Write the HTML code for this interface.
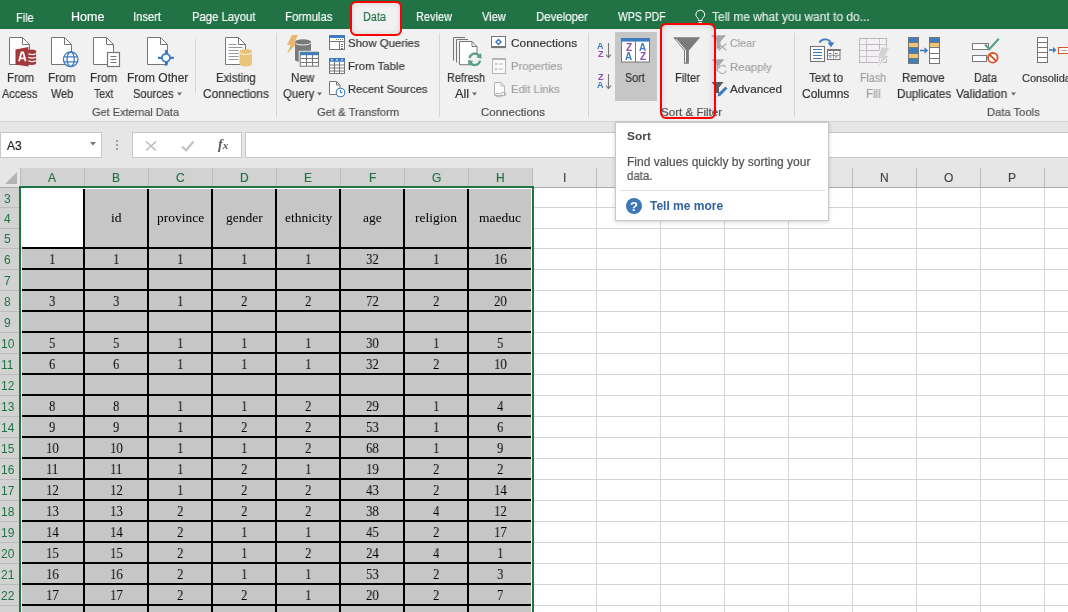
<!DOCTYPE html><html><head><meta charset="utf-8"><style>
*{box-sizing:border-box;margin:0;padding:0}
html,body{width:1068px;height:612px;overflow:hidden;background:#fff;font-family:"Liberation Sans", sans-serif;position:relative}
.abs{position:absolute}
.t{position:absolute;white-space:nowrap;line-height:1;will-change:transform}
.sk{-webkit-text-stroke:0.18px currentColor}
</style></head><body>
<div class="abs" style="left:0;top:0;width:1068px;height:29px;background:#217346"></div>
<div class="abs" style="left:0;top:29px;width:1068px;height:92px;background:#f1f1f1"></div>
<div class="abs" style="left:0;top:121px;width:1068px;height:1px;background:#d4d4d4"></div>
<div class="abs" style="left:0;top:122px;width:1068px;height:46px;background:#e6e6e6"></div>
<div class="abs" style="left:615px;top:32px;width:42px;height:69px;background:#c6c6c6"></div>
<div class="abs" style="left:661px;top:25px;width:53px;height:93px;background:#f1f1f1;box-shadow:inset 0 0 7px rgba(0,0,0,0.16);border-radius:5px"></div>
<div class="abs" style="left:351px;top:2px;width:50px;height:33px;background:#f1f1f1;box-shadow:inset 0 0 6px rgba(0,0,0,0.16);border-radius:5px"></div>
<div class="t sk" style="left:15.70px;top:12.22px;font-family:'Liberation Sans', sans-serif;font-size:12.5px;color:#fff;font-weight:normal;transform:scaleX(0.8700);transform-origin:0 0;">File</div>
<div class="t sk" style="left:71.20px;top:10.62px;font-family:'Liberation Sans', sans-serif;font-size:12.5px;color:#fff;font-weight:normal;transform:scaleX(0.9939);transform-origin:0 0;">Home</div>
<div class="t sk" style="left:133.40px;top:10.62px;font-family:'Liberation Sans', sans-serif;font-size:12.5px;color:#fff;font-weight:normal;transform:scaleX(0.8937);transform-origin:0 0;">Insert</div>
<div class="t sk" style="left:191.50px;top:10.62px;font-family:'Liberation Sans', sans-serif;font-size:12.5px;color:#fff;font-weight:normal;transform:scaleX(0.9042);transform-origin:0 0;">Page Layout</div>
<div class="t sk" style="left:285.40px;top:10.62px;font-family:'Liberation Sans', sans-serif;font-size:12.5px;color:#fff;font-weight:normal;transform:scaleX(0.9113);transform-origin:0 0;">Formulas</div>
<div class="t sk" style="left:363.20px;top:10.62px;font-family:'Liberation Sans', sans-serif;font-size:12.5px;color:#217346;font-weight:normal;transform:scaleX(0.8667);transform-origin:0 0;">Data</div>
<div class="t sk" style="left:416.00px;top:10.62px;font-family:'Liberation Sans', sans-serif;font-size:12.5px;color:#fff;font-weight:normal;transform:scaleX(0.8762);transform-origin:0 0;">Review</div>
<div class="t sk" style="left:481.90px;top:10.62px;font-family:'Liberation Sans', sans-serif;font-size:12.5px;color:#fff;font-weight:normal;transform:scaleX(0.8857);transform-origin:0 0;">View</div>
<div class="t sk" style="left:536.20px;top:10.62px;font-family:'Liberation Sans', sans-serif;font-size:12.5px;color:#fff;font-weight:normal;transform:scaleX(0.9138);transform-origin:0 0;">Developer</div>
<div class="t sk" style="left:618.00px;top:10.62px;font-family:'Liberation Sans', sans-serif;font-size:12.5px;color:#fff;font-weight:normal;transform:scaleX(0.8351);transform-origin:0 0;">WPS PDF</div>
<div class="t sk" style="left:712.40px;top:10.62px;font-family:'Liberation Sans', sans-serif;font-size:12.5px;color:#e0ebe4;font-weight:normal;transform:scaleX(0.9576);transform-origin:0 0;">Tell me what you want to do...</div>
<div class="t sk" style="left:6.60px;top:71.84px;font-family:'Liberation Sans', sans-serif;font-size:12px;color:#333333;font-weight:normal;transform:scaleX(0.9679);transform-origin:0 0;">From</div>
<div class="t sk" style="left:2.20px;top:87.74px;font-family:'Liberation Sans', sans-serif;font-size:12px;color:#333333;font-weight:normal;transform:scaleX(0.9128);transform-origin:0 0;">Access</div>
<div class="t sk" style="left:48.30px;top:71.84px;font-family:'Liberation Sans', sans-serif;font-size:12px;color:#333333;font-weight:normal;transform:scaleX(0.9821);transform-origin:0 0;">From</div>
<div class="t sk" style="left:50.60px;top:87.74px;font-family:'Liberation Sans', sans-serif;font-size:12px;color:#333333;font-weight:normal;transform:scaleX(0.9120);transform-origin:0 0;">Web</div>
<div class="t sk" style="left:90.40px;top:71.84px;font-family:'Liberation Sans', sans-serif;font-size:12px;color:#333333;font-weight:normal;transform:scaleX(0.9714);transform-origin:0 0;">From</div>
<div class="t sk" style="left:93.60px;top:87.74px;font-family:'Liberation Sans', sans-serif;font-size:12px;color:#333333;font-weight:normal;transform:scaleX(0.8739);transform-origin:0 0;">Text</div>
<div class="t sk" style="left:127.30px;top:71.84px;font-family:'Liberation Sans', sans-serif;font-size:12px;color:#333333;font-weight:normal;">From Other</div>
<div class="t sk" style="left:133.30px;top:87.74px;font-family:'Liberation Sans', sans-serif;font-size:12px;color:#333333;font-weight:normal;transform:scaleX(0.9205);transform-origin:0 0;">Sources</div>
<div class="t sk" style="left:215.60px;top:71.84px;font-family:'Liberation Sans', sans-serif;font-size:12px;color:#333333;font-weight:normal;transform:scaleX(0.9452);transform-origin:0 0;">Existing</div>
<div class="t sk" style="left:202.50px;top:87.74px;font-family:'Liberation Sans', sans-serif;font-size:12px;color:#333333;font-weight:normal;transform:scaleX(0.9881);transform-origin:0 0;">Connections</div>
<div class="t sk" style="left:291.30px;top:71.84px;font-family:'Liberation Sans', sans-serif;font-size:12px;color:#333333;font-weight:normal;transform:scaleX(0.9750);transform-origin:0 0;">New</div>
<div class="t sk" style="left:283.20px;top:87.74px;font-family:'Liberation Sans', sans-serif;font-size:12px;color:#333333;font-weight:normal;transform:scaleX(0.9545);transform-origin:0 0;">Query</div>
<div class="t sk" style="left:446.50px;top:71.84px;font-family:'Liberation Sans', sans-serif;font-size:12px;color:#333333;font-weight:normal;transform:scaleX(0.9071);transform-origin:0 0;">Refresh</div>
<div class="t sk" style="left:455.20px;top:87.74px;font-family:'Liberation Sans', sans-serif;font-size:12px;color:#333333;font-weight:normal;transform:scaleX(1.0615);transform-origin:0 0;">All</div>
<div class="t sk" style="left:625.20px;top:71.54px;font-family:'Liberation Sans', sans-serif;font-size:12px;color:#333333;font-weight:normal;transform:scaleX(0.8957);transform-origin:0 0;">Sort</div>
<div class="t sk" style="left:674.60px;top:71.84px;font-family:'Liberation Sans', sans-serif;font-size:12px;color:#333333;font-weight:normal;transform:scaleX(0.9333);transform-origin:0 0;">Filter</div>
<div class="t sk" style="left:808.70px;top:72.14px;font-family:'Liberation Sans', sans-serif;font-size:12px;color:#333333;font-weight:normal;transform:scaleX(0.9639);transform-origin:0 0;">Text to</div>
<div class="t sk" style="left:801.70px;top:88.24px;font-family:'Liberation Sans', sans-serif;font-size:12px;color:#333333;font-weight:normal;">Columns</div>
<div class="t sk" style="left:859.80px;top:72.14px;font-family:'Liberation Sans', sans-serif;font-size:12px;color:#a0a0a0;font-weight:normal;transform:scaleX(0.8862);transform-origin:0 0;">Flash</div>
<div class="t sk" style="left:865.50px;top:88.24px;font-family:'Liberation Sans', sans-serif;font-size:12px;color:#a0a0a0;font-weight:normal;transform:scaleX(0.9533);transform-origin:0 0;">Fill</div>
<div class="t sk" style="left:902.40px;top:72.14px;font-family:'Liberation Sans', sans-serif;font-size:12px;color:#333333;font-weight:normal;transform:scaleX(0.9556);transform-origin:0 0;">Remove</div>
<div class="t sk" style="left:896.70px;top:88.24px;font-family:'Liberation Sans', sans-serif;font-size:12px;color:#333333;font-weight:normal;transform:scaleX(0.9679);transform-origin:0 0;">Duplicates</div>
<div class="t sk" style="left:974.30px;top:72.14px;font-family:'Liberation Sans', sans-serif;font-size:12px;color:#333333;font-weight:normal;transform:scaleX(0.9000);transform-origin:0 0;">Data</div>
<div class="t sk" style="left:956.00px;top:88.24px;font-family:'Liberation Sans', sans-serif;font-size:12px;color:#333333;font-weight:normal;transform:scaleX(0.9865);transform-origin:0 0;">Validation</div>
<div class="t sk" style="left:1021.60px;top:72.99px;font-family:'Liberation Sans', sans-serif;font-size:11px;color:#333333;font-weight:normal;">Consolidate</div>
<div class="t sk" style="left:348.20px;top:37.77px;font-family:'Liberation Sans', sans-serif;font-size:11.5px;color:#333333;font-weight:normal;transform:scaleX(0.9917);transform-origin:0 0;">Show Queries</div>
<div class="t sk" style="left:348.20px;top:60.67px;font-family:'Liberation Sans', sans-serif;font-size:11.5px;color:#333333;font-weight:normal;transform:scaleX(0.9914);transform-origin:0 0;">From Table</div>
<div class="t sk" style="left:348.20px;top:83.57px;font-family:'Liberation Sans', sans-serif;font-size:11.5px;color:#333333;font-weight:normal;transform:scaleX(0.9707);transform-origin:0 0;">Recent Sources</div>
<div class="t sk" style="left:510.70px;top:37.77px;font-family:'Liberation Sans', sans-serif;font-size:11.5px;color:#333333;font-weight:normal;transform:scaleX(1.0344);transform-origin:0 0;">Connections</div>
<div class="t sk" style="left:510.70px;top:60.67px;font-family:'Liberation Sans', sans-serif;font-size:11.5px;color:#a0a0a0;font-weight:normal;transform:scaleX(0.9774);transform-origin:0 0;">Properties</div>
<div class="t sk" style="left:510.70px;top:83.57px;font-family:'Liberation Sans', sans-serif;font-size:11.5px;color:#a0a0a0;font-weight:normal;transform:scaleX(0.9800);transform-origin:0 0;">Edit Links</div>
<div class="t sk" style="left:730.40px;top:38.07px;font-family:'Liberation Sans', sans-serif;font-size:11.5px;color:#a0a0a0;font-weight:normal;transform:scaleX(0.9321);transform-origin:0 0;">Clear</div>
<div class="t sk" style="left:730.40px;top:61.57px;font-family:'Liberation Sans', sans-serif;font-size:11.5px;color:#a0a0a0;font-weight:normal;transform:scaleX(0.9857);transform-origin:0 0;">Reapply</div>
<div class="t sk" style="left:730.40px;top:83.77px;font-family:'Liberation Sans', sans-serif;font-size:11.5px;color:#333333;font-weight:normal;transform:scaleX(1.0176);transform-origin:0 0;">Advanced</div>
<div class="t sk" style="left:91.80px;top:106.77px;font-family:'Liberation Sans', sans-serif;font-size:11.5px;color:#505050;font-weight:normal;transform:scaleX(0.9522);transform-origin:0 0;">Get External Data</div>
<div class="t sk" style="left:316.70px;top:106.77px;font-family:'Liberation Sans', sans-serif;font-size:11.5px;color:#505050;font-weight:normal;transform:scaleX(0.9741);transform-origin:0 0;">Get &amp; Transform</div>
<div class="t sk" style="left:481.30px;top:106.77px;font-family:'Liberation Sans', sans-serif;font-size:11.5px;color:#505050;font-weight:normal;">Connections</div>
<div class="t sk" style="left:660.50px;top:106.77px;font-family:'Liberation Sans', sans-serif;font-size:11.5px;color:#505050;font-weight:normal;transform:scaleX(1.0066);transform-origin:0 0;">Sort &amp; Filter</div>
<div class="t sk" style="left:986.50px;top:106.77px;font-family:'Liberation Sans', sans-serif;font-size:11.5px;color:#505050;font-weight:normal;transform:scaleX(0.9722);transform-origin:0 0;">Data Tools</div>
<div class="abs" style="left:0px;top:132px;width:102px;height:26px;background:#fff;border:1px solid #c6c6c6"></div>
<div class="t sk" style="left:7.20px;top:139.64px;font-family:'Liberation Sans', sans-serif;font-size:12px;color:#222;font-weight:normal;">A3</div>
<div class="abs" style="left:132px;top:132px;width:110px;height:26px;background:#fff;border:1px solid #c6c6c6"></div>
<div class="t" style="left:217.5px;top:138px;font-family:'Liberation Serif', serif;font-style:italic;font-weight:bold;font-size:14px;color:#5a5a5a;letter-spacing:0px">f<span style="font-size:11px">x</span></div>
<div class="abs" style="left:245px;top:132px;width:830px;height:26px;background:#fff;border:1px solid #c6c6c6"></div>
<div class="abs" style="left:0;top:168px;width:1068px;height:19px;background:#e6e6e6"></div>
<div class="abs" style="left:20px;top:168px;width:512px;height:19px;background:#d2d2d2"></div>
<div class="abs" style="left:0;top:187px;width:1068px;height:1px;background:#ababab"></div>
<div class="abs" style="left:0;top:188px;width:20px;height:424px;background:#d2d2d2"></div>
<div class="abs" style="left:19px;top:188px;width:1px;height:424px;background:#ababab"></div>
<div class="abs" style="left:20px;top:168px;width:1px;height:19px;background:#bcbcbc"></div>
<div class="abs" style="left:84px;top:168px;width:1px;height:19px;background:#bcbcbc"></div>
<div class="abs" style="left:148px;top:168px;width:1px;height:19px;background:#bcbcbc"></div>
<div class="abs" style="left:212px;top:168px;width:1px;height:19px;background:#bcbcbc"></div>
<div class="abs" style="left:276px;top:168px;width:1px;height:19px;background:#bcbcbc"></div>
<div class="abs" style="left:340px;top:168px;width:1px;height:19px;background:#bcbcbc"></div>
<div class="abs" style="left:404px;top:168px;width:1px;height:19px;background:#bcbcbc"></div>
<div class="abs" style="left:468px;top:168px;width:1px;height:19px;background:#bcbcbc"></div>
<div class="abs" style="left:532px;top:168px;width:1px;height:19px;background:#bcbcbc"></div>
<div class="abs" style="left:596px;top:168px;width:1px;height:19px;background:#bcbcbc"></div>
<div class="abs" style="left:660px;top:168px;width:1px;height:19px;background:#bcbcbc"></div>
<div class="abs" style="left:724px;top:168px;width:1px;height:19px;background:#bcbcbc"></div>
<div class="abs" style="left:788px;top:168px;width:1px;height:19px;background:#bcbcbc"></div>
<div class="abs" style="left:852px;top:168px;width:1px;height:19px;background:#bcbcbc"></div>
<div class="abs" style="left:916px;top:168px;width:1px;height:19px;background:#bcbcbc"></div>
<div class="abs" style="left:980px;top:168px;width:1px;height:19px;background:#bcbcbc"></div>
<div class="abs" style="left:1044px;top:168px;width:1px;height:19px;background:#bcbcbc"></div>
<div class="abs" style="left:20px;top:188px;width:1048px;height:424px;background:#fff"></div>
<div class="abs" style="left:84px;top:188px;width:1px;height:424px;background:#d4d4d4"></div>
<div class="abs" style="left:148px;top:188px;width:1px;height:424px;background:#d4d4d4"></div>
<div class="abs" style="left:212px;top:188px;width:1px;height:424px;background:#d4d4d4"></div>
<div class="abs" style="left:276px;top:188px;width:1px;height:424px;background:#d4d4d4"></div>
<div class="abs" style="left:340px;top:188px;width:1px;height:424px;background:#d4d4d4"></div>
<div class="abs" style="left:404px;top:188px;width:1px;height:424px;background:#d4d4d4"></div>
<div class="abs" style="left:468px;top:188px;width:1px;height:424px;background:#d4d4d4"></div>
<div class="abs" style="left:532px;top:188px;width:1px;height:424px;background:#d4d4d4"></div>
<div class="abs" style="left:596px;top:188px;width:1px;height:424px;background:#d4d4d4"></div>
<div class="abs" style="left:660px;top:188px;width:1px;height:424px;background:#d4d4d4"></div>
<div class="abs" style="left:724px;top:188px;width:1px;height:424px;background:#d4d4d4"></div>
<div class="abs" style="left:788px;top:188px;width:1px;height:424px;background:#d4d4d4"></div>
<div class="abs" style="left:852px;top:188px;width:1px;height:424px;background:#d4d4d4"></div>
<div class="abs" style="left:916px;top:188px;width:1px;height:424px;background:#d4d4d4"></div>
<div class="abs" style="left:980px;top:188px;width:1px;height:424px;background:#d4d4d4"></div>
<div class="abs" style="left:1044px;top:188px;width:1px;height:424px;background:#d4d4d4"></div>
<div class="abs" style="left:20px;top:207px;width:1048px;height:1px;background:#d4d4d4"></div>
<div class="abs" style="left:20px;top:228px;width:1048px;height:1px;background:#d4d4d4"></div>
<div class="abs" style="left:20px;top:248px;width:1048px;height:1px;background:#d4d4d4"></div>
<div class="abs" style="left:20px;top:269px;width:1048px;height:1px;background:#d4d4d4"></div>
<div class="abs" style="left:20px;top:290px;width:1048px;height:1px;background:#d4d4d4"></div>
<div class="abs" style="left:20px;top:311px;width:1048px;height:1px;background:#d4d4d4"></div>
<div class="abs" style="left:20px;top:332px;width:1048px;height:1px;background:#d4d4d4"></div>
<div class="abs" style="left:20px;top:353px;width:1048px;height:1px;background:#d4d4d4"></div>
<div class="abs" style="left:20px;top:374px;width:1048px;height:1px;background:#d4d4d4"></div>
<div class="abs" style="left:20px;top:395px;width:1048px;height:1px;background:#d4d4d4"></div>
<div class="abs" style="left:20px;top:416px;width:1048px;height:1px;background:#d4d4d4"></div>
<div class="abs" style="left:20px;top:437px;width:1048px;height:1px;background:#d4d4d4"></div>
<div class="abs" style="left:20px;top:458px;width:1048px;height:1px;background:#d4d4d4"></div>
<div class="abs" style="left:20px;top:479px;width:1048px;height:1px;background:#d4d4d4"></div>
<div class="abs" style="left:20px;top:500px;width:1048px;height:1px;background:#d4d4d4"></div>
<div class="abs" style="left:20px;top:521px;width:1048px;height:1px;background:#d4d4d4"></div>
<div class="abs" style="left:20px;top:542px;width:1048px;height:1px;background:#d4d4d4"></div>
<div class="abs" style="left:20px;top:563px;width:1048px;height:1px;background:#d4d4d4"></div>
<div class="abs" style="left:20px;top:584px;width:1048px;height:1px;background:#d4d4d4"></div>
<div class="abs" style="left:20px;top:605px;width:1048px;height:1px;background:#d4d4d4"></div>
<div class="abs" style="left:20px;top:626px;width:1048px;height:1px;background:#d4d4d4"></div>
<div class="abs" style="left:20px;top:647px;width:1048px;height:1px;background:#d4d4d4"></div>
<div class="abs" style="left:0;top:207px;width:19px;height:1px;background:#bcbcbc"></div>
<div class="abs" style="left:0;top:228px;width:19px;height:1px;background:#bcbcbc"></div>
<div class="abs" style="left:0;top:248px;width:19px;height:1px;background:#bcbcbc"></div>
<div class="abs" style="left:0;top:269px;width:19px;height:1px;background:#bcbcbc"></div>
<div class="abs" style="left:0;top:290px;width:19px;height:1px;background:#bcbcbc"></div>
<div class="abs" style="left:0;top:311px;width:19px;height:1px;background:#bcbcbc"></div>
<div class="abs" style="left:0;top:332px;width:19px;height:1px;background:#bcbcbc"></div>
<div class="abs" style="left:0;top:353px;width:19px;height:1px;background:#bcbcbc"></div>
<div class="abs" style="left:0;top:374px;width:19px;height:1px;background:#bcbcbc"></div>
<div class="abs" style="left:0;top:395px;width:19px;height:1px;background:#bcbcbc"></div>
<div class="abs" style="left:0;top:416px;width:19px;height:1px;background:#bcbcbc"></div>
<div class="abs" style="left:0;top:437px;width:19px;height:1px;background:#bcbcbc"></div>
<div class="abs" style="left:0;top:458px;width:19px;height:1px;background:#bcbcbc"></div>
<div class="abs" style="left:0;top:479px;width:19px;height:1px;background:#bcbcbc"></div>
<div class="abs" style="left:0;top:500px;width:19px;height:1px;background:#bcbcbc"></div>
<div class="abs" style="left:0;top:521px;width:19px;height:1px;background:#bcbcbc"></div>
<div class="abs" style="left:0;top:542px;width:19px;height:1px;background:#bcbcbc"></div>
<div class="abs" style="left:0;top:563px;width:19px;height:1px;background:#bcbcbc"></div>
<div class="abs" style="left:0;top:584px;width:19px;height:1px;background:#bcbcbc"></div>
<div class="abs" style="left:0;top:605px;width:19px;height:1px;background:#bcbcbc"></div>
<div class="abs" style="left:0;top:626px;width:19px;height:1px;background:#bcbcbc"></div>
<div class="t sk" style="left:48.00px;top:171.84px;font-family:'Liberation Sans', sans-serif;font-size:12px;color:#217346;font-weight:normal;">A</div>
<div class="t sk" style="left:112.00px;top:171.84px;font-family:'Liberation Sans', sans-serif;font-size:12px;color:#217346;font-weight:normal;">B</div>
<div class="t sk" style="left:175.50px;top:171.84px;font-family:'Liberation Sans', sans-serif;font-size:12px;color:#217346;font-weight:normal;">C</div>
<div class="t sk" style="left:239.50px;top:171.84px;font-family:'Liberation Sans', sans-serif;font-size:12px;color:#217346;font-weight:normal;">D</div>
<div class="t sk" style="left:304.00px;top:171.84px;font-family:'Liberation Sans', sans-serif;font-size:12px;color:#217346;font-weight:normal;">E</div>
<div class="t sk" style="left:368.50px;top:171.84px;font-family:'Liberation Sans', sans-serif;font-size:12px;color:#217346;font-weight:normal;">F</div>
<div class="t sk" style="left:431.50px;top:171.84px;font-family:'Liberation Sans', sans-serif;font-size:12px;color:#217346;font-weight:normal;">G</div>
<div class="t sk" style="left:495.50px;top:171.84px;font-family:'Liberation Sans', sans-serif;font-size:12px;color:#217346;font-weight:normal;">H</div>
<div class="t sk" style="left:562.50px;top:171.84px;font-family:'Liberation Sans', sans-serif;font-size:12px;color:#444;font-weight:normal;">I</div>
<div class="t sk" style="left:625.00px;top:171.84px;font-family:'Liberation Sans', sans-serif;font-size:12px;color:#444;font-weight:normal;">J</div>
<div class="t sk" style="left:688.00px;top:171.84px;font-family:'Liberation Sans', sans-serif;font-size:12px;color:#444;font-weight:normal;">K</div>
<div class="t sk" style="left:752.50px;top:171.84px;font-family:'Liberation Sans', sans-serif;font-size:12px;color:#444;font-weight:normal;">L</div>
<div class="t sk" style="left:815.00px;top:171.84px;font-family:'Liberation Sans', sans-serif;font-size:12px;color:#444;font-weight:normal;">M</div>
<div class="t sk" style="left:879.50px;top:171.84px;font-family:'Liberation Sans', sans-serif;font-size:12px;color:#444;font-weight:normal;">N</div>
<div class="t sk" style="left:943.50px;top:171.84px;font-family:'Liberation Sans', sans-serif;font-size:12px;color:#444;font-weight:normal;">O</div>
<div class="t sk" style="left:1008.00px;top:171.84px;font-family:'Liberation Sans', sans-serif;font-size:12px;color:#444;font-weight:normal;">P</div>
<div class="t" style="left:4.30px;top:193.04px;font-family:'Liberation Sans', sans-serif;font-size:12px;color:#217346;font-weight:normal;">3</div>
<div class="t" style="left:4.30px;top:213.04px;font-family:'Liberation Sans', sans-serif;font-size:12px;color:#217346;font-weight:normal;">4</div>
<div class="t" style="left:4.30px;top:233.44px;font-family:'Liberation Sans', sans-serif;font-size:12px;color:#217346;font-weight:normal;">5</div>
<div class="t" style="left:4.30px;top:254.04px;font-family:'Liberation Sans', sans-serif;font-size:12px;color:#217346;font-weight:normal;">6</div>
<div class="t" style="left:4.30px;top:275.04px;font-family:'Liberation Sans', sans-serif;font-size:12px;color:#217346;font-weight:normal;">7</div>
<div class="t" style="left:4.30px;top:296.04px;font-family:'Liberation Sans', sans-serif;font-size:12px;color:#217346;font-weight:normal;">8</div>
<div class="t" style="left:4.30px;top:317.04px;font-family:'Liberation Sans', sans-serif;font-size:12px;color:#217346;font-weight:normal;">9</div>
<div class="t" style="left:0.80px;top:338.04px;font-family:'Liberation Sans', sans-serif;font-size:12px;color:#217346;font-weight:normal;">10</div>
<div class="t" style="left:1.30px;top:359.04px;font-family:'Liberation Sans', sans-serif;font-size:12px;color:#217346;font-weight:normal;">11</div>
<div class="t" style="left:0.80px;top:380.04px;font-family:'Liberation Sans', sans-serif;font-size:12px;color:#217346;font-weight:normal;">12</div>
<div class="t" style="left:0.80px;top:401.04px;font-family:'Liberation Sans', sans-serif;font-size:12px;color:#217346;font-weight:normal;">13</div>
<div class="t" style="left:0.80px;top:422.04px;font-family:'Liberation Sans', sans-serif;font-size:12px;color:#217346;font-weight:normal;">14</div>
<div class="t" style="left:0.80px;top:443.04px;font-family:'Liberation Sans', sans-serif;font-size:12px;color:#217346;font-weight:normal;">15</div>
<div class="t" style="left:0.80px;top:464.04px;font-family:'Liberation Sans', sans-serif;font-size:12px;color:#217346;font-weight:normal;">16</div>
<div class="t" style="left:0.80px;top:485.04px;font-family:'Liberation Sans', sans-serif;font-size:12px;color:#217346;font-weight:normal;">17</div>
<div class="t" style="left:0.80px;top:506.04px;font-family:'Liberation Sans', sans-serif;font-size:12px;color:#217346;font-weight:normal;">18</div>
<div class="t" style="left:0.80px;top:527.04px;font-family:'Liberation Sans', sans-serif;font-size:12px;color:#217346;font-weight:normal;">19</div>
<div class="t" style="left:0.80px;top:548.04px;font-family:'Liberation Sans', sans-serif;font-size:12px;color:#217346;font-weight:normal;">20</div>
<div class="t" style="left:0.80px;top:569.04px;font-family:'Liberation Sans', sans-serif;font-size:12px;color:#217346;font-weight:normal;">21</div>
<div class="t" style="left:0.80px;top:590.04px;font-family:'Liberation Sans', sans-serif;font-size:12px;color:#217346;font-weight:normal;">22</div>
<div class="t" style="left:0.80px;top:611.04px;font-family:'Liberation Sans', sans-serif;font-size:12px;color:#217346;font-weight:normal;">23</div>
<div class="abs" style="left:21px;top:188px;width:511px;height:424px;background:#fff"></div>
<div class="abs" style="left:22px;top:189px;width:509px;height:423px;background:#c6c6c6"></div>
<div class="abs" style="left:22px;top:189px;width:61px;height:58px;background:#fff"></div>
<div class="abs" style="left:83px;top:189px;width:2px;height:423px;background:#000"></div>
<div class="abs" style="left:147px;top:189px;width:2px;height:423px;background:#000"></div>
<div class="abs" style="left:211px;top:189px;width:2px;height:423px;background:#000"></div>
<div class="abs" style="left:275px;top:189px;width:2px;height:423px;background:#000"></div>
<div class="abs" style="left:339px;top:189px;width:2px;height:423px;background:#000"></div>
<div class="abs" style="left:403px;top:189px;width:2px;height:423px;background:#000"></div>
<div class="abs" style="left:467px;top:189px;width:2px;height:423px;background:#000"></div>
<div class="abs" style="left:22px;top:247px;width:509px;height:2px;background:#000"></div>
<div class="abs" style="left:22px;top:268px;width:509px;height:2px;background:#000"></div>
<div class="abs" style="left:22px;top:289px;width:509px;height:2px;background:#000"></div>
<div class="abs" style="left:22px;top:310px;width:509px;height:2px;background:#000"></div>
<div class="abs" style="left:22px;top:331px;width:509px;height:2px;background:#000"></div>
<div class="abs" style="left:22px;top:352px;width:509px;height:2px;background:#000"></div>
<div class="abs" style="left:22px;top:373px;width:509px;height:2px;background:#000"></div>
<div class="abs" style="left:22px;top:394px;width:509px;height:2px;background:#000"></div>
<div class="abs" style="left:22px;top:415px;width:509px;height:2px;background:#000"></div>
<div class="abs" style="left:22px;top:436px;width:509px;height:2px;background:#000"></div>
<div class="abs" style="left:22px;top:457px;width:509px;height:2px;background:#000"></div>
<div class="abs" style="left:22px;top:478px;width:509px;height:2px;background:#000"></div>
<div class="abs" style="left:22px;top:499px;width:509px;height:2px;background:#000"></div>
<div class="abs" style="left:22px;top:520px;width:509px;height:2px;background:#000"></div>
<div class="abs" style="left:22px;top:541px;width:509px;height:2px;background:#000"></div>
<div class="abs" style="left:22px;top:562px;width:509px;height:2px;background:#000"></div>
<div class="abs" style="left:22px;top:583px;width:509px;height:2px;background:#000"></div>
<div class="abs" style="left:22px;top:604px;width:509px;height:2px;background:#000"></div>
<div class="abs" style="left:22px;top:625px;width:509px;height:2px;background:#000"></div>
<div class="abs" style="left:22px;top:646px;width:509px;height:2px;background:#000"></div>
<div class="t" style="left:110.50px;top:211.19px;font-family:'Liberation Serif', serif;font-size:13.5px;color:#000;font-weight:normal;">id</div>
<div class="t" style="left:156.50px;top:211.19px;font-family:'Liberation Serif', serif;font-size:13.5px;color:#000;font-weight:normal;">province</div>
<div class="t" style="left:225.50px;top:211.19px;font-family:'Liberation Serif', serif;font-size:13.5px;color:#000;font-weight:normal;">gender</div>
<div class="t" style="left:284.50px;top:211.19px;font-family:'Liberation Serif', serif;font-size:13.5px;color:#000;font-weight:normal;">ethnicity</div>
<div class="t" style="left:362.50px;top:211.19px;font-family:'Liberation Serif', serif;font-size:13.5px;color:#000;font-weight:normal;">age</div>
<div class="t" style="left:415.00px;top:211.19px;font-family:'Liberation Serif', serif;font-size:13.5px;color:#000;font-weight:normal;">religion</div>
<div class="t" style="left:479.00px;top:211.19px;font-family:'Liberation Serif', serif;font-size:13.5px;color:#000;font-weight:normal;">maeduc</div>
<div class="t" style="left:49.02px;top:252.97px;font-family:'Liberation Serif', serif;font-size:14px;color:#000;font-weight:normal;transform:scaleX(0.9100);transform-origin:0 0;">1</div>
<div class="t" style="left:113.02px;top:252.97px;font-family:'Liberation Serif', serif;font-size:14px;color:#000;font-weight:normal;transform:scaleX(0.9100);transform-origin:0 0;">1</div>
<div class="t" style="left:177.01px;top:252.97px;font-family:'Liberation Serif', serif;font-size:14px;color:#000;font-weight:normal;transform:scaleX(0.9100);transform-origin:0 0;">1</div>
<div class="t" style="left:241.01px;top:252.97px;font-family:'Liberation Serif', serif;font-size:14px;color:#000;font-weight:normal;transform:scaleX(0.9100);transform-origin:0 0;">1</div>
<div class="t" style="left:305.01px;top:252.97px;font-family:'Liberation Serif', serif;font-size:14px;color:#000;font-weight:normal;transform:scaleX(0.9100);transform-origin:0 0;">1</div>
<div class="t" style="left:365.83px;top:252.97px;font-family:'Liberation Serif', serif;font-size:14px;color:#000;font-weight:normal;transform:scaleX(0.9100);transform-origin:0 0;">32</div>
<div class="t" style="left:433.01px;top:252.97px;font-family:'Liberation Serif', serif;font-size:14px;color:#000;font-weight:normal;transform:scaleX(0.9100);transform-origin:0 0;">1</div>
<div class="t" style="left:493.83px;top:252.97px;font-family:'Liberation Serif', serif;font-size:14px;color:#000;font-weight:normal;transform:scaleX(0.9100);transform-origin:0 0;">16</div>
<div class="t" style="left:49.02px;top:294.97px;font-family:'Liberation Serif', serif;font-size:14px;color:#000;font-weight:normal;transform:scaleX(0.9100);transform-origin:0 0;">3</div>
<div class="t" style="left:113.02px;top:294.97px;font-family:'Liberation Serif', serif;font-size:14px;color:#000;font-weight:normal;transform:scaleX(0.9100);transform-origin:0 0;">3</div>
<div class="t" style="left:177.01px;top:294.97px;font-family:'Liberation Serif', serif;font-size:14px;color:#000;font-weight:normal;transform:scaleX(0.9100);transform-origin:0 0;">1</div>
<div class="t" style="left:241.01px;top:294.97px;font-family:'Liberation Serif', serif;font-size:14px;color:#000;font-weight:normal;transform:scaleX(0.9100);transform-origin:0 0;">2</div>
<div class="t" style="left:305.01px;top:294.97px;font-family:'Liberation Serif', serif;font-size:14px;color:#000;font-weight:normal;transform:scaleX(0.9100);transform-origin:0 0;">2</div>
<div class="t" style="left:365.83px;top:294.97px;font-family:'Liberation Serif', serif;font-size:14px;color:#000;font-weight:normal;transform:scaleX(0.9100);transform-origin:0 0;">72</div>
<div class="t" style="left:433.01px;top:294.97px;font-family:'Liberation Serif', serif;font-size:14px;color:#000;font-weight:normal;transform:scaleX(0.9100);transform-origin:0 0;">2</div>
<div class="t" style="left:493.83px;top:294.97px;font-family:'Liberation Serif', serif;font-size:14px;color:#000;font-weight:normal;transform:scaleX(0.9100);transform-origin:0 0;">20</div>
<div class="t" style="left:49.02px;top:336.97px;font-family:'Liberation Serif', serif;font-size:14px;color:#000;font-weight:normal;transform:scaleX(0.9100);transform-origin:0 0;">5</div>
<div class="t" style="left:113.02px;top:336.97px;font-family:'Liberation Serif', serif;font-size:14px;color:#000;font-weight:normal;transform:scaleX(0.9100);transform-origin:0 0;">5</div>
<div class="t" style="left:177.01px;top:336.97px;font-family:'Liberation Serif', serif;font-size:14px;color:#000;font-weight:normal;transform:scaleX(0.9100);transform-origin:0 0;">1</div>
<div class="t" style="left:241.01px;top:336.97px;font-family:'Liberation Serif', serif;font-size:14px;color:#000;font-weight:normal;transform:scaleX(0.9100);transform-origin:0 0;">1</div>
<div class="t" style="left:305.01px;top:336.97px;font-family:'Liberation Serif', serif;font-size:14px;color:#000;font-weight:normal;transform:scaleX(0.9100);transform-origin:0 0;">1</div>
<div class="t" style="left:365.83px;top:336.97px;font-family:'Liberation Serif', serif;font-size:14px;color:#000;font-weight:normal;transform:scaleX(0.9100);transform-origin:0 0;">30</div>
<div class="t" style="left:433.01px;top:336.97px;font-family:'Liberation Serif', serif;font-size:14px;color:#000;font-weight:normal;transform:scaleX(0.9100);transform-origin:0 0;">1</div>
<div class="t" style="left:497.01px;top:336.97px;font-family:'Liberation Serif', serif;font-size:14px;color:#000;font-weight:normal;transform:scaleX(0.9100);transform-origin:0 0;">5</div>
<div class="t" style="left:49.02px;top:357.97px;font-family:'Liberation Serif', serif;font-size:14px;color:#000;font-weight:normal;transform:scaleX(0.9100);transform-origin:0 0;">6</div>
<div class="t" style="left:113.02px;top:357.97px;font-family:'Liberation Serif', serif;font-size:14px;color:#000;font-weight:normal;transform:scaleX(0.9100);transform-origin:0 0;">6</div>
<div class="t" style="left:177.01px;top:357.97px;font-family:'Liberation Serif', serif;font-size:14px;color:#000;font-weight:normal;transform:scaleX(0.9100);transform-origin:0 0;">1</div>
<div class="t" style="left:241.01px;top:357.97px;font-family:'Liberation Serif', serif;font-size:14px;color:#000;font-weight:normal;transform:scaleX(0.9100);transform-origin:0 0;">1</div>
<div class="t" style="left:305.01px;top:357.97px;font-family:'Liberation Serif', serif;font-size:14px;color:#000;font-weight:normal;transform:scaleX(0.9100);transform-origin:0 0;">1</div>
<div class="t" style="left:365.83px;top:357.97px;font-family:'Liberation Serif', serif;font-size:14px;color:#000;font-weight:normal;transform:scaleX(0.9100);transform-origin:0 0;">32</div>
<div class="t" style="left:433.01px;top:357.97px;font-family:'Liberation Serif', serif;font-size:14px;color:#000;font-weight:normal;transform:scaleX(0.9100);transform-origin:0 0;">2</div>
<div class="t" style="left:493.83px;top:357.97px;font-family:'Liberation Serif', serif;font-size:14px;color:#000;font-weight:normal;transform:scaleX(0.9100);transform-origin:0 0;">10</div>
<div class="t" style="left:49.02px;top:399.97px;font-family:'Liberation Serif', serif;font-size:14px;color:#000;font-weight:normal;transform:scaleX(0.9100);transform-origin:0 0;">8</div>
<div class="t" style="left:113.02px;top:399.97px;font-family:'Liberation Serif', serif;font-size:14px;color:#000;font-weight:normal;transform:scaleX(0.9100);transform-origin:0 0;">8</div>
<div class="t" style="left:177.01px;top:399.97px;font-family:'Liberation Serif', serif;font-size:14px;color:#000;font-weight:normal;transform:scaleX(0.9100);transform-origin:0 0;">1</div>
<div class="t" style="left:241.01px;top:399.97px;font-family:'Liberation Serif', serif;font-size:14px;color:#000;font-weight:normal;transform:scaleX(0.9100);transform-origin:0 0;">1</div>
<div class="t" style="left:305.01px;top:399.97px;font-family:'Liberation Serif', serif;font-size:14px;color:#000;font-weight:normal;transform:scaleX(0.9100);transform-origin:0 0;">2</div>
<div class="t" style="left:365.83px;top:399.97px;font-family:'Liberation Serif', serif;font-size:14px;color:#000;font-weight:normal;transform:scaleX(0.9100);transform-origin:0 0;">29</div>
<div class="t" style="left:433.01px;top:399.97px;font-family:'Liberation Serif', serif;font-size:14px;color:#000;font-weight:normal;transform:scaleX(0.9100);transform-origin:0 0;">1</div>
<div class="t" style="left:497.01px;top:399.97px;font-family:'Liberation Serif', serif;font-size:14px;color:#000;font-weight:normal;transform:scaleX(0.9100);transform-origin:0 0;">4</div>
<div class="t" style="left:49.02px;top:420.97px;font-family:'Liberation Serif', serif;font-size:14px;color:#000;font-weight:normal;transform:scaleX(0.9100);transform-origin:0 0;">9</div>
<div class="t" style="left:113.02px;top:420.97px;font-family:'Liberation Serif', serif;font-size:14px;color:#000;font-weight:normal;transform:scaleX(0.9100);transform-origin:0 0;">9</div>
<div class="t" style="left:177.01px;top:420.97px;font-family:'Liberation Serif', serif;font-size:14px;color:#000;font-weight:normal;transform:scaleX(0.9100);transform-origin:0 0;">1</div>
<div class="t" style="left:241.01px;top:420.97px;font-family:'Liberation Serif', serif;font-size:14px;color:#000;font-weight:normal;transform:scaleX(0.9100);transform-origin:0 0;">2</div>
<div class="t" style="left:305.01px;top:420.97px;font-family:'Liberation Serif', serif;font-size:14px;color:#000;font-weight:normal;transform:scaleX(0.9100);transform-origin:0 0;">2</div>
<div class="t" style="left:365.83px;top:420.97px;font-family:'Liberation Serif', serif;font-size:14px;color:#000;font-weight:normal;transform:scaleX(0.9100);transform-origin:0 0;">53</div>
<div class="t" style="left:433.01px;top:420.97px;font-family:'Liberation Serif', serif;font-size:14px;color:#000;font-weight:normal;transform:scaleX(0.9100);transform-origin:0 0;">1</div>
<div class="t" style="left:497.01px;top:420.97px;font-family:'Liberation Serif', serif;font-size:14px;color:#000;font-weight:normal;transform:scaleX(0.9100);transform-origin:0 0;">6</div>
<div class="t" style="left:45.83px;top:441.97px;font-family:'Liberation Serif', serif;font-size:14px;color:#000;font-weight:normal;transform:scaleX(0.9100);transform-origin:0 0;">10</div>
<div class="t" style="left:109.83px;top:441.97px;font-family:'Liberation Serif', serif;font-size:14px;color:#000;font-weight:normal;transform:scaleX(0.9100);transform-origin:0 0;">10</div>
<div class="t" style="left:177.01px;top:441.97px;font-family:'Liberation Serif', serif;font-size:14px;color:#000;font-weight:normal;transform:scaleX(0.9100);transform-origin:0 0;">1</div>
<div class="t" style="left:241.01px;top:441.97px;font-family:'Liberation Serif', serif;font-size:14px;color:#000;font-weight:normal;transform:scaleX(0.9100);transform-origin:0 0;">1</div>
<div class="t" style="left:305.01px;top:441.97px;font-family:'Liberation Serif', serif;font-size:14px;color:#000;font-weight:normal;transform:scaleX(0.9100);transform-origin:0 0;">2</div>
<div class="t" style="left:365.83px;top:441.97px;font-family:'Liberation Serif', serif;font-size:14px;color:#000;font-weight:normal;transform:scaleX(0.9100);transform-origin:0 0;">68</div>
<div class="t" style="left:433.01px;top:441.97px;font-family:'Liberation Serif', serif;font-size:14px;color:#000;font-weight:normal;transform:scaleX(0.9100);transform-origin:0 0;">1</div>
<div class="t" style="left:497.01px;top:441.97px;font-family:'Liberation Serif', serif;font-size:14px;color:#000;font-weight:normal;transform:scaleX(0.9100);transform-origin:0 0;">9</div>
<div class="t" style="left:46.29px;top:462.97px;font-family:'Liberation Serif', serif;font-size:14px;color:#000;font-weight:normal;transform:scaleX(0.9100);transform-origin:0 0;">11</div>
<div class="t" style="left:110.28px;top:462.97px;font-family:'Liberation Serif', serif;font-size:14px;color:#000;font-weight:normal;transform:scaleX(0.9100);transform-origin:0 0;">11</div>
<div class="t" style="left:177.01px;top:462.97px;font-family:'Liberation Serif', serif;font-size:14px;color:#000;font-weight:normal;transform:scaleX(0.9100);transform-origin:0 0;">1</div>
<div class="t" style="left:241.01px;top:462.97px;font-family:'Liberation Serif', serif;font-size:14px;color:#000;font-weight:normal;transform:scaleX(0.9100);transform-origin:0 0;">2</div>
<div class="t" style="left:305.01px;top:462.97px;font-family:'Liberation Serif', serif;font-size:14px;color:#000;font-weight:normal;transform:scaleX(0.9100);transform-origin:0 0;">1</div>
<div class="t" style="left:365.83px;top:462.97px;font-family:'Liberation Serif', serif;font-size:14px;color:#000;font-weight:normal;transform:scaleX(0.9100);transform-origin:0 0;">19</div>
<div class="t" style="left:433.01px;top:462.97px;font-family:'Liberation Serif', serif;font-size:14px;color:#000;font-weight:normal;transform:scaleX(0.9100);transform-origin:0 0;">2</div>
<div class="t" style="left:497.01px;top:462.97px;font-family:'Liberation Serif', serif;font-size:14px;color:#000;font-weight:normal;transform:scaleX(0.9100);transform-origin:0 0;">2</div>
<div class="t" style="left:45.83px;top:483.97px;font-family:'Liberation Serif', serif;font-size:14px;color:#000;font-weight:normal;transform:scaleX(0.9100);transform-origin:0 0;">12</div>
<div class="t" style="left:109.83px;top:483.97px;font-family:'Liberation Serif', serif;font-size:14px;color:#000;font-weight:normal;transform:scaleX(0.9100);transform-origin:0 0;">12</div>
<div class="t" style="left:177.01px;top:483.97px;font-family:'Liberation Serif', serif;font-size:14px;color:#000;font-weight:normal;transform:scaleX(0.9100);transform-origin:0 0;">1</div>
<div class="t" style="left:241.01px;top:483.97px;font-family:'Liberation Serif', serif;font-size:14px;color:#000;font-weight:normal;transform:scaleX(0.9100);transform-origin:0 0;">2</div>
<div class="t" style="left:305.01px;top:483.97px;font-family:'Liberation Serif', serif;font-size:14px;color:#000;font-weight:normal;transform:scaleX(0.9100);transform-origin:0 0;">2</div>
<div class="t" style="left:365.83px;top:483.97px;font-family:'Liberation Serif', serif;font-size:14px;color:#000;font-weight:normal;transform:scaleX(0.9100);transform-origin:0 0;">43</div>
<div class="t" style="left:433.01px;top:483.97px;font-family:'Liberation Serif', serif;font-size:14px;color:#000;font-weight:normal;transform:scaleX(0.9100);transform-origin:0 0;">2</div>
<div class="t" style="left:493.83px;top:483.97px;font-family:'Liberation Serif', serif;font-size:14px;color:#000;font-weight:normal;transform:scaleX(0.9100);transform-origin:0 0;">14</div>
<div class="t" style="left:45.83px;top:504.98px;font-family:'Liberation Serif', serif;font-size:14px;color:#000;font-weight:normal;transform:scaleX(0.9100);transform-origin:0 0;">13</div>
<div class="t" style="left:109.83px;top:504.98px;font-family:'Liberation Serif', serif;font-size:14px;color:#000;font-weight:normal;transform:scaleX(0.9100);transform-origin:0 0;">13</div>
<div class="t" style="left:177.01px;top:504.98px;font-family:'Liberation Serif', serif;font-size:14px;color:#000;font-weight:normal;transform:scaleX(0.9100);transform-origin:0 0;">2</div>
<div class="t" style="left:241.01px;top:504.98px;font-family:'Liberation Serif', serif;font-size:14px;color:#000;font-weight:normal;transform:scaleX(0.9100);transform-origin:0 0;">2</div>
<div class="t" style="left:305.01px;top:504.98px;font-family:'Liberation Serif', serif;font-size:14px;color:#000;font-weight:normal;transform:scaleX(0.9100);transform-origin:0 0;">2</div>
<div class="t" style="left:365.83px;top:504.98px;font-family:'Liberation Serif', serif;font-size:14px;color:#000;font-weight:normal;transform:scaleX(0.9100);transform-origin:0 0;">38</div>
<div class="t" style="left:433.01px;top:504.98px;font-family:'Liberation Serif', serif;font-size:14px;color:#000;font-weight:normal;transform:scaleX(0.9100);transform-origin:0 0;">4</div>
<div class="t" style="left:493.83px;top:504.98px;font-family:'Liberation Serif', serif;font-size:14px;color:#000;font-weight:normal;transform:scaleX(0.9100);transform-origin:0 0;">12</div>
<div class="t" style="left:45.83px;top:525.98px;font-family:'Liberation Serif', serif;font-size:14px;color:#000;font-weight:normal;transform:scaleX(0.9100);transform-origin:0 0;">14</div>
<div class="t" style="left:109.83px;top:525.98px;font-family:'Liberation Serif', serif;font-size:14px;color:#000;font-weight:normal;transform:scaleX(0.9100);transform-origin:0 0;">14</div>
<div class="t" style="left:177.01px;top:525.98px;font-family:'Liberation Serif', serif;font-size:14px;color:#000;font-weight:normal;transform:scaleX(0.9100);transform-origin:0 0;">2</div>
<div class="t" style="left:241.01px;top:525.98px;font-family:'Liberation Serif', serif;font-size:14px;color:#000;font-weight:normal;transform:scaleX(0.9100);transform-origin:0 0;">1</div>
<div class="t" style="left:305.01px;top:525.98px;font-family:'Liberation Serif', serif;font-size:14px;color:#000;font-weight:normal;transform:scaleX(0.9100);transform-origin:0 0;">1</div>
<div class="t" style="left:365.83px;top:525.98px;font-family:'Liberation Serif', serif;font-size:14px;color:#000;font-weight:normal;transform:scaleX(0.9100);transform-origin:0 0;">45</div>
<div class="t" style="left:433.01px;top:525.98px;font-family:'Liberation Serif', serif;font-size:14px;color:#000;font-weight:normal;transform:scaleX(0.9100);transform-origin:0 0;">2</div>
<div class="t" style="left:493.83px;top:525.98px;font-family:'Liberation Serif', serif;font-size:14px;color:#000;font-weight:normal;transform:scaleX(0.9100);transform-origin:0 0;">17</div>
<div class="t" style="left:45.83px;top:546.98px;font-family:'Liberation Serif', serif;font-size:14px;color:#000;font-weight:normal;transform:scaleX(0.9100);transform-origin:0 0;">15</div>
<div class="t" style="left:109.83px;top:546.98px;font-family:'Liberation Serif', serif;font-size:14px;color:#000;font-weight:normal;transform:scaleX(0.9100);transform-origin:0 0;">15</div>
<div class="t" style="left:177.01px;top:546.98px;font-family:'Liberation Serif', serif;font-size:14px;color:#000;font-weight:normal;transform:scaleX(0.9100);transform-origin:0 0;">2</div>
<div class="t" style="left:241.01px;top:546.98px;font-family:'Liberation Serif', serif;font-size:14px;color:#000;font-weight:normal;transform:scaleX(0.9100);transform-origin:0 0;">1</div>
<div class="t" style="left:305.01px;top:546.98px;font-family:'Liberation Serif', serif;font-size:14px;color:#000;font-weight:normal;transform:scaleX(0.9100);transform-origin:0 0;">2</div>
<div class="t" style="left:365.83px;top:546.98px;font-family:'Liberation Serif', serif;font-size:14px;color:#000;font-weight:normal;transform:scaleX(0.9100);transform-origin:0 0;">24</div>
<div class="t" style="left:433.01px;top:546.98px;font-family:'Liberation Serif', serif;font-size:14px;color:#000;font-weight:normal;transform:scaleX(0.9100);transform-origin:0 0;">4</div>
<div class="t" style="left:497.01px;top:546.98px;font-family:'Liberation Serif', serif;font-size:14px;color:#000;font-weight:normal;transform:scaleX(0.9100);transform-origin:0 0;">1</div>
<div class="t" style="left:45.83px;top:567.98px;font-family:'Liberation Serif', serif;font-size:14px;color:#000;font-weight:normal;transform:scaleX(0.9100);transform-origin:0 0;">16</div>
<div class="t" style="left:109.83px;top:567.98px;font-family:'Liberation Serif', serif;font-size:14px;color:#000;font-weight:normal;transform:scaleX(0.9100);transform-origin:0 0;">16</div>
<div class="t" style="left:177.01px;top:567.98px;font-family:'Liberation Serif', serif;font-size:14px;color:#000;font-weight:normal;transform:scaleX(0.9100);transform-origin:0 0;">2</div>
<div class="t" style="left:241.01px;top:567.98px;font-family:'Liberation Serif', serif;font-size:14px;color:#000;font-weight:normal;transform:scaleX(0.9100);transform-origin:0 0;">1</div>
<div class="t" style="left:305.01px;top:567.98px;font-family:'Liberation Serif', serif;font-size:14px;color:#000;font-weight:normal;transform:scaleX(0.9100);transform-origin:0 0;">1</div>
<div class="t" style="left:365.83px;top:567.98px;font-family:'Liberation Serif', serif;font-size:14px;color:#000;font-weight:normal;transform:scaleX(0.9100);transform-origin:0 0;">53</div>
<div class="t" style="left:433.01px;top:567.98px;font-family:'Liberation Serif', serif;font-size:14px;color:#000;font-weight:normal;transform:scaleX(0.9100);transform-origin:0 0;">2</div>
<div class="t" style="left:497.01px;top:567.98px;font-family:'Liberation Serif', serif;font-size:14px;color:#000;font-weight:normal;transform:scaleX(0.9100);transform-origin:0 0;">3</div>
<div class="t" style="left:45.83px;top:588.98px;font-family:'Liberation Serif', serif;font-size:14px;color:#000;font-weight:normal;transform:scaleX(0.9100);transform-origin:0 0;">17</div>
<div class="t" style="left:109.83px;top:588.98px;font-family:'Liberation Serif', serif;font-size:14px;color:#000;font-weight:normal;transform:scaleX(0.9100);transform-origin:0 0;">17</div>
<div class="t" style="left:177.01px;top:588.98px;font-family:'Liberation Serif', serif;font-size:14px;color:#000;font-weight:normal;transform:scaleX(0.9100);transform-origin:0 0;">2</div>
<div class="t" style="left:241.01px;top:588.98px;font-family:'Liberation Serif', serif;font-size:14px;color:#000;font-weight:normal;transform:scaleX(0.9100);transform-origin:0 0;">2</div>
<div class="t" style="left:305.01px;top:588.98px;font-family:'Liberation Serif', serif;font-size:14px;color:#000;font-weight:normal;transform:scaleX(0.9100);transform-origin:0 0;">1</div>
<div class="t" style="left:365.83px;top:588.98px;font-family:'Liberation Serif', serif;font-size:14px;color:#000;font-weight:normal;transform:scaleX(0.9100);transform-origin:0 0;">20</div>
<div class="t" style="left:433.01px;top:588.98px;font-family:'Liberation Serif', serif;font-size:14px;color:#000;font-weight:normal;transform:scaleX(0.9100);transform-origin:0 0;">2</div>
<div class="t" style="left:497.01px;top:588.98px;font-family:'Liberation Serif', serif;font-size:14px;color:#000;font-weight:normal;transform:scaleX(0.9100);transform-origin:0 0;">7</div>
<div class="abs" style="left:19px;top:186px;width:515px;height:440px;border:2px solid #217346"></div>
<svg class="abs" style="left:0;top:0;z-index:1" width="1068" height="612" viewBox="0 0 1068 612"><path d="M9.5 37.5H22.5L29.5 44.5V64.5H9.5Z" fill="#fff" stroke="#767676" stroke-width="1"/><path d="M22.5 37.5V44.5H29.5" fill="none" stroke="#767676" stroke-width="1"/><path d="M15.5 49.5L28.5 47V66.5L15.5 64.5Z" fill="#a4373a"/><path d="M27.5 51.5a4.3 1.9 0 0 1 8.6 0v11.6a4.3 1.9 0 0 1 -8.6 0Z" fill="#a4373a"/><path d="M28.3 53.8q3.9 1.6 7.6 0M28.3 57.3q3.9 1.6 7.6 0M28.3 60.8q3.9 1.6 7.6 0" fill="none" stroke="#fff" stroke-width="1.1"/><path d="M19 61.2L21.5 52.5H23.2L25.6 61.2M20.2 58.4h4.2" fill="none" stroke="#fff" stroke-width="1.8"/><path d="M51.5 37.5H64.5L71.5 44.5V64.5H51.5Z" fill="#fff" stroke="#767676" stroke-width="1"/><path d="M64.5 37.5V44.5H71.5" fill="none" stroke="#767676" stroke-width="1"/><circle cx="70.7" cy="59.3" r="7.3" fill="#fff" stroke="#3e7bbf" stroke-width="1.3"/><ellipse cx="70.7" cy="59.3" rx="3.6" ry="7.2" fill="none" stroke="#3e7bbf" stroke-width="1.3"/><path d="M63.8 56.8h13.8M63.8 61.8h13.8" stroke="#3e7bbf" stroke-width="1.3"/><path d="M93.5 37.5H106.5L113.5 44.5V64.5H93.5Z" fill="#fff" stroke="#767676" stroke-width="1"/><path d="M106.5 37.5V44.5H113.5" fill="none" stroke="#767676" stroke-width="1"/><rect x="107.5" y="52.5" width="12" height="14" fill="#fff" stroke="#767676" stroke-width="1.2"/><path d="M110.5 56.5h6M110.5 59.5h6M110.5 62.5h6" stroke="#767676" stroke-width="1"/><path d="M147.5 37.5H160.5L167.5 44.5V64.5H147.5Z" fill="#fff" stroke="#767676" stroke-width="1"/><path d="M160.5 37.5V44.5H167.5" fill="none" stroke="#767676" stroke-width="1"/><path d="M158 57.8h15.8M166 50v15.8" stroke="#3e7bbf" stroke-width="2.2"/><circle cx="166" cy="57.8" r="4" fill="#f8f8f8" stroke="#3e7bbf" stroke-width="1.8"/><path d="M225.5 37.5H238.5L245.5 44.5V64.5H225.5Z" fill="#fff" stroke="#767676" stroke-width="1"/><path d="M238.5 37.5V44.5H245.5" fill="none" stroke="#767676" stroke-width="1"/><path d="M228.5 44.5h8M228.5 47.5h14M228.5 50.5h10M228.5 53.5h10M228.5 56.5h10M228.5 59.5h10" stroke="#999" stroke-width="1"/><path d="M239.5 51.5a6.2 2.4 0 0 1 12.4 0V64a6.2 2.4 0 0 1 -12.4 0Z" fill="#e8c47a"/><path d="M239.8 52.5a6 2 0 0 0 12 0" fill="none" stroke="#fff" stroke-width="0.8"/><path d="M292 35H298L294.3 42.6H297.6L287 54L290.6 45H287Z" fill="#e8b86d"/><path d="M295 41.7a8 2.5 0 0 1 16 0V59.8a8 2.5 0 0 1 -16 0Z" fill="#7a7a7a"/><path d="M295.3 42.8a7.7 2.2 0 0 0 15.4 0" fill="none" stroke="#fff" stroke-width="0.9"/><rect x="299.5" y="51.5" width="19.5" height="15" fill="#fff" stroke="#f1f1f1" stroke-width="1.5"/><rect x="300.2" y="52.2" width="18.3" height="14" fill="#fff" stroke="#767676" stroke-width="1"/><rect x="300.2" y="52.2" width="18.3" height="3" fill="#3e7bbf"/><path d="M306.5 55v11M312.5 55v11M300.5 58.5h18M300.5 62.5h18" stroke="#767676" stroke-width="1"/><rect x="329.5" y="35.5" width="15" height="14" fill="#fff" stroke="#767676" stroke-width="1"/><rect x="329" y="35" width="16" height="3" fill="#3e7bbf"/><path d="M330 41.5h14M339.5 42v7.5" stroke="#767676" stroke-width="1"/><path d="M336 39.5h1M338 39.5h1M340 39.5h1M342 39.5h1M341 44.5h2M341 46.5h2M341 48.5h2" stroke="#767676" stroke-width="1"/><rect x="329.5" y="58.5" width="15" height="15" fill="#fff" stroke="#767676" stroke-width="1"/><rect x="329" y="58" width="16" height="3.8" fill="#3e7bbf"/><path d="M334.5 62v11.5M339.5 62v11.5M330 65h14M330 68h14M330 71h14" stroke="#767676" stroke-width="1"/><path d="M331 59.9h2M336 59.9h2M341 59.9h2" stroke="#fff" stroke-width="1"/><path d="M329.5 81.5H336.5L340.0 85.0V94.5H329.5Z" fill="#fff" stroke="#767676" stroke-width="1"/><path d="M336.5 81.5V85.0H340.0" fill="none" stroke="#767676" stroke-width="1"/><circle cx="340.5" cy="92.5" r="4.3" fill="#fff" stroke="#3e7bbf" stroke-width="1.1"/><path d="M340.5 90v2.7h2.2" fill="none" stroke="#3e7bbf" stroke-width="1"/><path d="M453.5 60.5V37.5H465" fill="none" stroke="#767676" stroke-width="1"/><path d="M456.5 62.5V39.5H468" fill="none" stroke="#767676" stroke-width="1"/><path d="M459.5 41.5H472.0L477.0 46.5V64.7H459.5Z" fill="#fff" stroke="#767676" stroke-width="1"/><path d="M472.0 41.5V46.5H477.0" fill="none" stroke="#767676" stroke-width="1"/><circle cx="474.8" cy="59.3" r="6.8" fill="#f1f1f1"/><path d="M469.6 58A5.3 5.3 0 0 1 479.4 56.2" fill="none" stroke="#5a9e87" stroke-width="2.3"/><path d="M480 60.6A5.3 5.3 0 0 1 470.2 62.4" fill="none" stroke="#5a9e87" stroke-width="2.3"/><path d="M481.2 53L481.5 58.5L476.3 57.5Z" fill="#5a9e87"/><path d="M468.4 65.6L468.1 60.1L473.3 61.1Z" fill="#5a9e87"/><rect x="491.5" y="36.5" width="14" height="10" fill="#fff" stroke="#767676" stroke-width="1"/><path d="M491 47.5h15" stroke="#767676" stroke-width="1.2"/><path d="M498.5 39.5l2.5 2.5l-2.5 2.5l-2.5-2.5Z" fill="none" stroke="#3e7bbf" stroke-width="1.5"/><rect x="492.5" y="58.5" width="13" height="15" fill="#fbfbfb" stroke="#b4b4b4" stroke-width="1"/><rect x="492" y="58" width="14" height="2" fill="#b4b4b4"/><circle cx="496" cy="64" r="1" fill="none" stroke="#b4b4b4" stroke-width="0.8"/><circle cx="496" cy="69" r="1" fill="none" stroke="#b4b4b4" stroke-width="0.8"/><path d="M498.5 64h4.5M498.5 69h4.5" stroke="#b4b4b4" stroke-width="1"/><path d="M494.5 82.5H501.0L504.5 86.0V95.5H494.5Z" fill="#fbfbfb" stroke="#b4b4b4" stroke-width="1"/><path d="M501.0 82.5V86.0H504.5" fill="none" stroke="#b4b4b4" stroke-width="1"/><path d="M497 93.5h3.5a1.6 1.6 0 0 1 0 3.2h-3.5a1.6 1.6 0 0 1 0-3.2ZM501.5 92.5h3a1.6 1.6 0 0 1 0 3.2h-3" fill="none" stroke="#b4b4b4" stroke-width="1"/><path d="M673 37.2H700.3L688.9 50.6V63.8H684V50.6Z" fill="#7b7b7b"/><path d="M676 39.2L685.5 50.3V62.5" fill="none" stroke="#fff" stroke-width="1"/><path d="M711 35.3H726L720.5 41.5V48.7H716.5V41.5Z" fill="#a8a8a8"/><path d="M718.5 43.5l8 7M726.5 43.5l-8 7" stroke="#b0b0b0" stroke-width="1.3"/><path d="M711.5 59.2H724.5L719.5 65V71.5H716.5V65Z" fill="#a8a8a8"/><circle cx="722.5" cy="69.5" r="4.5" fill="#f1f1f1"/><path d="M719 68.5A3.6 3.6 0 0 1 725.8 67.5M726 70.5A3.6 3.6 0 0 1 719.2 71.5" fill="none" stroke="#b0b0b0" stroke-width="1.2"/><path d="M711.5 82H723.5L719 87.5V93H716V87.5Z" fill="#5a5a5a"/><path d="M717.5 96.5L718.3 93.6L725.4 86.5L727.5 88.6L720.4 95.7Z" fill="#3e7bbf"/><rect x="810.5" y="46.5" width="14" height="15" fill="#fff" stroke="#767676" stroke-width="1.1"/><path d="M813 49.5h9M813 52.5h9M813 55.5h9M813 58.5h9" stroke="#3e7bbf" stroke-width="1"/><rect x="827.5" y="49.5" width="12.5" height="10" fill="#fff" stroke="#767676" stroke-width="1"/><rect x="827" y="49" width="13.5" height="2" fill="#767676"/><path d="M829 53.5h2.5M835 53.5h2.5M829 57h2.5M835 57h2.5" stroke="#3e7bbf" stroke-width="1"/><path d="M833.7 49.5v10M828 55.3h12" stroke="#767676" stroke-width="0.8"/><path d="M819.5 42.5A6 5 0 0 1 831 43.5" fill="none" stroke="#3e7bbf" stroke-width="1.8"/><path d="M827.5 42.5L831 47.3L834.5 42.5Z" fill="#3e7bbf"/><rect x="859.5" y="38.5" width="27" height="24" fill="#f5f0f5" stroke="#b8b8b8" stroke-width="1"/><path d="M866.5 39v23.5M879.5 39v23.5M860 44.5h26M860 50.5h26M860 56.5h26" stroke="#c8c8c8" stroke-width="1"/><rect x="866.5" y="44.5" width="13" height="6" fill="#f5f0f5" stroke="#b8b8b8" stroke-width="1"/><path d="M881 47H890L885.5 55.5H889.5L877 68L881.5 58.5H877.5Z" fill="#d4d4d4" stroke="#f1f1f1" stroke-width="1"/><rect x="908.5" y="37.50" width="10" height="5.2" fill="#3e7bbf"/><rect x="908.5" y="42.70" width="10" height="5.2" fill="#efc675"/><rect x="908.5" y="47.90" width="10" height="5.2" fill="#3e7bbf"/><rect x="908.5" y="53.10" width="10" height="5.2" fill="#efc675"/><rect x="908.5" y="58.30" width="10" height="5.2" fill="#3e7bbf"/><rect x="908.5" y="37.5" width="10" height="26" fill="none" stroke="#767676" stroke-width="1"/><path d="M908.5 42.5h10" stroke="#767676" stroke-width="1"/><path d="M908.5 47.5h10" stroke="#767676" stroke-width="1"/><path d="M908.5 53.5h10" stroke="#767676" stroke-width="1"/><path d="M908.5 58.5h10" stroke="#767676" stroke-width="1"/><rect x="929.5" y="37.50" width="10" height="5.2" fill="#3e7bbf"/><rect x="929.5" y="42.70" width="10" height="5.2" fill="#efc675"/><rect x="929.5" y="47.90" width="10" height="5.2" fill="#fff"/><rect x="929.5" y="53.10" width="10" height="5.2" fill="#fff"/><rect x="929.5" y="58.30" width="10" height="5.2" fill="#fff"/><rect x="929.5" y="37.5" width="10" height="26" fill="none" stroke="#767676" stroke-width="1"/><path d="M929.5 42.5h10" stroke="#767676" stroke-width="1"/><path d="M929.5 47.5h10" stroke="#767676" stroke-width="1"/><path d="M929.5 53.5h10" stroke="#767676" stroke-width="1"/><path d="M929.5 58.5h10" stroke="#767676" stroke-width="1"/><path d="M920 50.5h6" stroke="#3e7bbf" stroke-width="1.6"/><path d="M924.5 47.3L928.2 50.5L924.5 53.7Z" fill="#3e7bbf"/><rect x="972.5" y="43.5" width="16" height="6" fill="#fff" stroke="#7a7a7a" stroke-width="1"/><rect x="972.5" y="55.5" width="14" height="6" fill="#fff" stroke="#7a7a7a" stroke-width="1"/><path d="M985 44.5L989.3 49.2L998.8 38.8" fill="none" stroke="#5aa08a" stroke-width="2.2"/><circle cx="992.8" cy="57.8" r="4.8" fill="#fff" stroke="#d9532c" stroke-width="1.8"/><path d="M989.5 54.5L996.1 61.1" stroke="#d9532c" stroke-width="1.8"/><rect x="1037.5" y="37.5" width="10" height="25" fill="#fff" stroke="#767676" stroke-width="1"/><path d="M1037.5 42.5h10M1037.5 47.5h10M1037.5 52.5h10M1037.5 57.5h10" stroke="#767676" stroke-width="1"/><path d="M1049 50h5" stroke="#3e7bbf" stroke-width="1.6"/><path d="M1053 47L1056.5 50L1053 53Z" fill="#3e7bbf"/><rect x="1058.5" y="47.5" width="12" height="6" fill="#fff" stroke="#d9532c" stroke-width="1"/><path d="M1061 50.5h6" stroke="#999" stroke-width="0.8"/><path d="M195.5 39V93" stroke="#d6d6d6" stroke-width="1"/><path d="M276.5 33V117" stroke="#d6d6d6" stroke-width="1"/><path d="M439.5 33V117" stroke="#d6d6d6" stroke-width="1"/><path d="M588.5 33V117" stroke="#d6d6d6" stroke-width="1"/><path d="M794.5 33V117" stroke="#d6d6d6" stroke-width="1"/><path d="M177.0 92.5h5l-2.5 3z" fill="#666"/><path d="M317.0 92.5h5l-2.5 3z" fill="#666"/><path d="M472.0 92.5h5l-2.5 3z" fill="#666"/><path d="M1011.0 92.5h5l-2.5 3z" fill="#666"/><path d="M700.3 10.2a4.3 4.3 0 0 0-2.6 7.8c.5.4.8 1 .8 1.6v1h3.6v-1c0-.6.3-1.2.8-1.6a4.3 4.3 0 0 0-2.6-7.8z" fill="none" stroke="#fff" stroke-width="1"/><path d="M698.5 22.5h3.6M699 24h2.6" stroke="#fff" stroke-width="1"/><path d="M90 142h6l-3 3.5z" fill="#777"/><rect x="116" y="140" width="2" height="2" fill="#a0a0a0"/><rect x="116" y="144" width="2" height="2" fill="#a0a0a0"/><rect x="116" y="148" width="2" height="2" fill="#a0a0a0"/><path d="M146 141.5L156 150.5M156 141.5L146 150.5" stroke="#b8b8b8" stroke-width="1.4"/><path d="M182 146.5L186 150.3L193.5 141.5" fill="none" stroke="#c4c4c4" stroke-width="2.2"/><path d="M17 172L17 184L5 184Z" fill="#b3b3b3"/></svg>
<svg class="abs" style="left:0;top:0;z-index:2" width="1068" height="612" viewBox="0 0 1068 612"><rect x="621.5" y="38.5" width="28" height="23.5" fill="#fff" stroke="#767676" stroke-width="1"/><rect x="621" y="38" width="29" height="3.6" fill="#3e7bbf"/><path d="M635.5 41.5V62" stroke="#767676" stroke-width="1"/></svg>
<div class="t" style="left:625.50px;top:42.83px;font-family:'Liberation Sans', sans-serif;font-size:10px;color:#8b4fb0;font-weight:bold;z-index:3;">Z</div>
<div class="t" style="left:625.00px;top:52.33px;font-family:'Liberation Sans', sans-serif;font-size:10px;color:#3e7bbf;font-weight:bold;z-index:3;">A</div>
<div class="t" style="left:639.00px;top:42.83px;font-family:'Liberation Sans', sans-serif;font-size:10px;color:#3e7bbf;font-weight:bold;z-index:3;">A</div>
<div class="t" style="left:639.50px;top:52.33px;font-family:'Liberation Sans', sans-serif;font-size:10px;color:#8b4fb0;font-weight:bold;z-index:3;">Z</div>
<div class="t" style="left:597.30px;top:42.08px;font-family:'Liberation Sans', sans-serif;font-size:9px;color:#3e7bbf;font-weight:bold;z-index:3;">A</div>
<div class="t" style="left:597.80px;top:50.38px;font-family:'Liberation Sans', sans-serif;font-size:9px;color:#8b4fb0;font-weight:bold;z-index:3;">Z</div>
<div class="t" style="left:597.80px;top:73.38px;font-family:'Liberation Sans', sans-serif;font-size:9px;color:#8b4fb0;font-weight:bold;z-index:3;">Z</div>
<div class="t" style="left:597.30px;top:81.28px;font-family:'Liberation Sans', sans-serif;font-size:9px;color:#3e7bbf;font-weight:bold;z-index:3;">A</div>
<svg class="abs" style="left:0;top:0;z-index:3" width="1068" height="612" viewBox="0 0 1068 612"><path d="M608.5 43V57.5M606 54.5L608.5 57.7L611 54.5" fill="none" stroke="#767676" stroke-width="1.1"/><path d="M608.5 74V88.5M606 85.5L608.5 88.7L611 85.5" fill="none" stroke="#767676" stroke-width="1.1"/></svg>
<div class="abs" style="left:615px;top:122px;width:214px;height:99px;background:#fff;border:1px solid #c8c8c8;box-shadow:0 1px 4px rgba(0,0,0,0.18);z-index:5"></div>
<div class="t" style="left:627.00px;top:131.17px;font-family:'Liberation Sans', sans-serif;font-size:11.5px;color:#4a4a4a;font-weight:bold;transform:scaleX(1.0391);transform-origin:0 0;z-index:6;">Sort</div>
<div class="t sk" style="left:627.00px;top:155.64px;font-family:'Liberation Sans', sans-serif;font-size:12px;color:#505050;font-weight:normal;z-index:6;">Find values quickly by sorting your</div>
<div class="t sk" style="left:627.00px;top:170.34px;font-family:'Liberation Sans', sans-serif;font-size:12px;color:#505050;font-weight:normal;transform:scaleX(0.9556);transform-origin:0 0;z-index:6;">data.</div>
<div class="abs" style="left:620px;top:190px;width:205px;height:1px;background:#dedede;z-index:6"></div>
<svg class="abs" style="left:625px;top:197px;z-index:6" width="18" height="18"><circle cx="9" cy="9" r="8" fill="#3d77b8"/></svg>
<div class="t" style="left:630.00px;top:199.50px;font-family:'Liberation Sans', sans-serif;font-size:13px;color:#fff;font-weight:bold;z-index:7;">?</div>
<div class="t" style="left:649.90px;top:199.74px;font-family:'Liberation Sans', sans-serif;font-size:12px;color:#2f63a3;font-weight:bold;z-index:6;">Tell me more</div>
<div class="abs" style="left:350px;top:1px;width:52px;height:35px;border:2px solid #ff0000;border-radius:6px;z-index:8"></div>
<div class="abs" style="left:659.5px;top:23.3px;width:56px;height:96px;border:2.5px solid #ff0000;border-radius:6px;z-index:8"></div>
</body></html>
